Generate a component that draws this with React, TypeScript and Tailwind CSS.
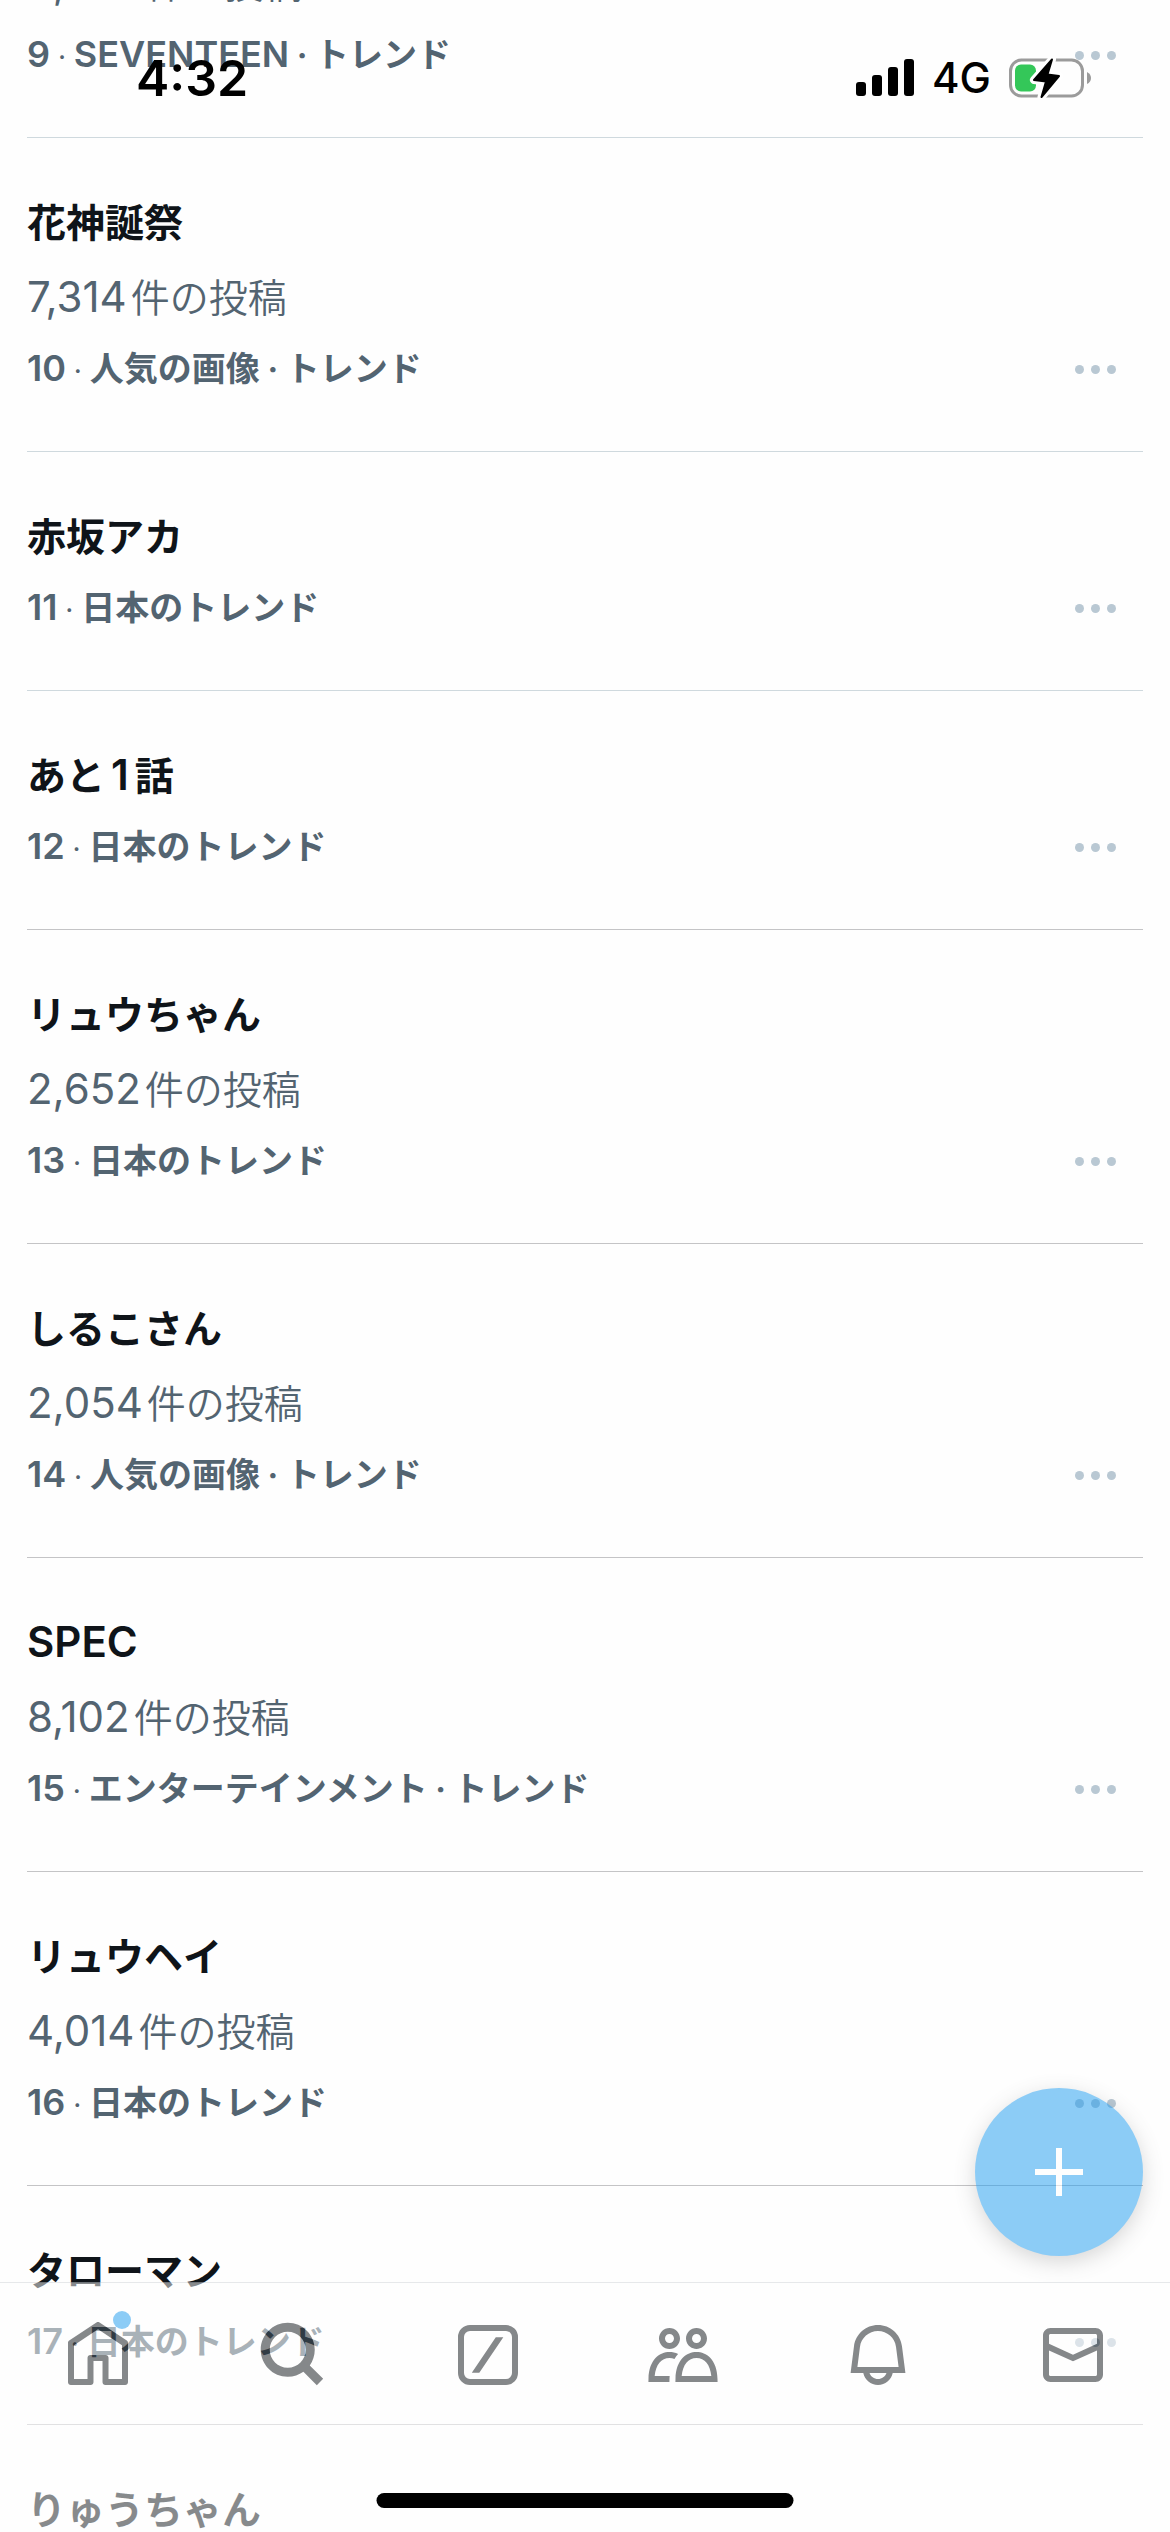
import React from 'react';
import clsx from 'clsx';

interface Trend {
    rank: number;
    title: string;
    posts?: string;
    category: string[];
    softDivider?: boolean;
}

const trends: Trend[] = [
    { rank: 9, title: 'ウジさん', posts: '4,868', category: ['SEVENTEEN', 'トレンド'], softDivider: true },
    { rank: 10, title: '花神誕祭', posts: '7,314', category: ['人気の画像', 'トレンド'], softDivider: true },
    { rank: 11, title: '赤坂アカ', category: ['日本のトレンド'], softDivider: true },
    { rank: 12, title: 'あと1話', category: ['日本のトレンド'] },
    { rank: 13, title: 'リュウちゃん', posts: '2,652', category: ['日本のトレンド'] },
    { rank: 14, title: 'しるこさん', posts: '2,054', category: ['人気の画像', 'トレンド'] },
    { rank: 15, title: 'SPEC', posts: '8,102', category: ['エンターテインメント', 'トレンド'] },
    { rank: 16, title: 'リュウヘイ', posts: '4,014', category: ['日本のトレンド'] },
    { rank: 17, title: 'タローマン', category: ['日本のトレンド'] },
    { rank: 18, title: 'りゅうちゃん', category: ['日本のトレンド'] }
];

const tabs = [
    {
        label: 'ホーム',
        badge: true,
        d: 'M21.591 7.146L12.52 1.157c-.316-.21-.724-.21-1.04 0l-9.071 5.99c-.26.173-.409.456-.409.757v13.183c0 .502.418.913.929.913h6.638c.511 0 .929-.41.929-.913v-7.075h3.008v7.075c0 .502.418.913.929.913h6.639c.51 0 .928-.41.928-.913V7.904c0-.301-.158-.584-.408-.758zM20 20l-4.5.01.011-7.097c0-.502-.418-.913-.928-.913H9.44c-.511 0-.929.41-.929.913L8.5 20H4V8.773l8.011-5.342L20 8.764z'
    },
    {
        label: '検索',
        d: 'M10.25 4.25c-3.314 0-6 2.686-6 6s2.686 6 6 6c1.657 0 3.155-.67 4.243-1.757 1.087-1.088 1.757-2.586 1.757-4.243 0-3.314-2.686-6-6-6zm-9 6c0-4.971 4.029-9 9-9s9 4.029 9 9c0 1.943-.617 3.744-1.664 5.215l4.475 4.474-2.122 2.122-4.474-4.475c-1.471 1.047-3.272 1.664-5.215 1.664-4.971 0-9-4.029-9-9z'
    },
    {
        label: 'Grok',
        d: 'M6 2h12a4 4 0 0 1 4 4v12a4 4 0 0 1-4 4H6a4 4 0 0 1-4-4V6a4 4 0 0 1 4-4zm0 2a2 2 0 0 0-2 2v12a2 2 0 0 0 2 2h12a2 2 0 0 0 2-2V6a2 2 0 0 0-2-2zM14.6 6.1h2.5L9.1 17.9H6.6z'
    },
    {
        label: 'コミュニティ',
        d: 'M7.501 19.917L7.471 21H.472l.029-1.027c.184-6.618 3.736-8.977 7-8.977.963 0 1.95.212 2.87.672-.444.478-.851 1.03-1.212 1.656-.507-.204-1.054-.329-1.658-.329-2.767 0-4.57 2.223-4.938 6.004H7.56c-.023.302-.05.599-.059.918zm15.998.056L23.528 21H9.472l.029-1.027c.184-6.618 3.736-8.977 7-8.977s6.816 2.358 7 8.977zM21.437 19c-.367-3.781-2.17-6.004-4.938-6.004s-4.57 2.223-4.938 6.004h9.875zm-4.938-9c-.799 0-1.527-.279-2.116-.73-.836-.64-1.384-1.638-1.384-2.77 0-1.93 1.567-3.5 3.5-3.5s3.5 1.57 3.5 3.5c0 1.132-.548 2.13-1.384 2.77-.589.451-1.317.73-2.116.73zm-1.5-3.5c0 .827.673 1.5 1.5 1.5s1.5-.673 1.5-1.5-.673-1.5-1.5-1.5-1.5.673-1.5 1.5zM7.5 3C9.433 3 11 4.57 11 6.5S9.433 10 7.5 10 4 8.43 4 6.5 5.567 3 7.5 3zm0 2C6.673 5 6 5.673 6 6.5S6.673 8 7.5 8 9 7.327 9 6.5 8.327 5 7.5 5z'
    },
    {
        label: '通知',
        d: 'M19.993 9.042C19.48 5.017 16.054 2 11.996 2s-7.49 3.021-7.999 7.051L2.866 18H7.1c.463 2.282 2.481 4 4.9 4s4.437-1.718 4.9-4h4.236l-1.143-8.958zM12 20c-1.306 0-2.417-.835-2.829-2h5.658c-.412 1.165-1.523 2-2.829 2zm-6.866-4l.847-6.698C6.364 6.272 8.941 4 11.996 4s5.627 2.268 6.013 5.295L18.864 16H5.134z'
    },
    {
        label: 'メッセージ',
        d: 'M1.998 5.5c0-1.381 1.119-2.5 2.5-2.5h15c1.381 0 2.5 1.119 2.5 2.5v13c0 1.381-1.119 2.5-2.5 2.5h-15c-1.381 0-2.5-1.119-2.5-2.5v-13zm2.5-.5c-.276 0-.5.224-.5.5v2.764l8 3.638 8-3.636V5.5c0-.276-.224-.5-.5-.5h-15zm15.5 5.463l-8 3.636-8-3.638V18.5c0 .276.224.5.5.5h15c.276 0 .5-.224.5-.5v-8.037z'
    }
];

// Kana and kanji are set a little smaller than the Latin text beside them,
// and a Latin run between two Japanese ones gets some air on both sides
function MixedText({ text, jpClass }: { text: string; jpClass: string }) {
    const parts = text.split(/([ぁ-んァ-ヶー一-龠]+)/);
    return parts.map((part, i) => {
        if (i % 2 === 1) return <span key={i} className={jpClass}>{part}</span>;
        const between = i > 0 && i < parts.length - 1;
        return <span key={i} className={clsx(between && 'mx-[6px]')}>{part}</span>;
    });
}

function TrendRow({ trend }: { trend: Trend }) {
    return (
        <li
            className={clsx(
                'mx-[27px] pt-[58px] pb-[59px] border-b',
                trend.softDivider ? 'border-[#cfd9de]' : 'border-[#c4c4c6]'
            )}
        >
            <h2 className="h-[52px] leading-[52px] text-[42px] font-semibold text-[#0f1419] whitespace-nowrap">
                <MixedText text={trend.title} jpClass="text-[39px]" />
            </h2>
            {trend.posts && (
                <p className="mt-[22px] h-[53px] leading-[53px] text-[42px] text-[#536471] whitespace-nowrap">
                    {trend.posts}
                    <span className="ml-1 text-[39px] font-[350]">件の投稿</span>
                </p>
            )}
            <div className="mt-[23px] h-[46px] flex items-center justify-between">
                <p className="leading-[46px] text-[36px] font-semibold text-[#536471] whitespace-nowrap">
                    {trend.rank}
                    <span className="text-[28px] font-normal"> · </span>
                    {trend.category.map((name, i) => (
                        <React.Fragment key={name}>
                            {i > 0 && <span className="text-[32px] font-bold"> · </span>}
                            <MixedText text={name} jpClass="text-[34px]" />
                        </React.Fragment>
                    ))}
                </p>
                <button aria-label="その他" className="flex items-center gap-[7px] mr-[27px] h-full">
                    <span className="size-[9px] rounded-full bg-[#b9c8d3]" />
                    <span className="size-[9px] rounded-full bg-[#b9c8d3]" />
                    <span className="size-[9px] rounded-full bg-[#b9c8d3]" />
                </button>
            </div>
        </li>
    );
}

function StatusBar() {
    return (
        <header className="absolute inset-x-0 top-0 flex items-center justify-between pt-[48px] pl-[136px] pr-[78px] text-black">
            <time className="leading-[60px] text-[50px] font-semibold">4:32</time>
            <div className="flex items-center">
                <svg width="58" height="38" viewBox="0 0 58 38" aria-hidden="true">
                    <rect x="0" y="23" width="10" height="14" rx="3" />
                    <rect x="16" y="16" width="10" height="21" rx="3" />
                    <rect x="32" y="8" width="10" height="29" rx="3" />
                    <rect x="48" y="0" width="10" height="37" rx="3" />
                </svg>
                <span className="ml-[18px] leading-[60px] text-[42px] font-medium">4G</span>
                <svg className="ml-[18px]" width="83" height="42" viewBox="0 0 83 42" aria-hidden="true">
                    <rect x="1.5" y="3" width="72" height="36" rx="11" fill="none" stroke="#9b9b9b" strokeWidth="3" />
                    <path d="M78 15q4 2 4 6t-4 6z" fill="#9b9b9b" />
                    <rect x="6" y="7.5" width="21" height="27" rx="6" fill="#34c759" />
                    <path
                        d="M43 2.5L25 23L37 24.5L32.5 40L50 19L38.5 17.5z"
                        stroke="#fff"
                        strokeWidth="8"
                        strokeLinejoin="round"
                    />
                    <path
                        d="M43 2.5L25 23L37 24.5L32.5 40L50 19L38.5 17.5z"
                        stroke="#000"
                        strokeWidth="2"
                        strokeLinejoin="round"
                    />
                </svg>
            </div>
        </header>
    );
}

function TabBar() {
    return (
        <nav className="absolute inset-x-0 bottom-0 h-[250px] pt-[36px] grid grid-cols-6 items-start justify-items-center bg-white border-t border-[#cfd4d8] opacity-50">
            {tabs.map(tab => (
                <button key={tab.label} aria-label={tab.label} className="relative size-[72px]">
                    <svg viewBox="0 0 24 24" className="size-[72px] fill-[#0f1419]" aria-hidden="true">
                        <path fillRule={tab.label === 'Grok' ? 'evenodd' : 'nonzero'} d={tab.d} />
                    </svg>
                    {tab.badge && (
                        <span className="absolute -top-[8px] right-[3px] size-[18px] rounded-full bg-[#1d9bf0]" />
                    )}
                </button>
            ))}
        </nav>
    );
}

export default function App() {
    return (
        <div className="relative h-screen overflow-hidden bg-[#fefefe] font-['Inter','Noto_Sans_CJK_JP',sans-serif]">
            <main>
                <ul className="-mt-[176px]">
                    {trends.map(trend => (
                        <TrendRow key={trend.rank} trend={trend} />
                    ))}
                </ul>
            </main>

            <StatusBar />

            <button
                aria-label="ポストする"
                className="absolute right-[27px] bottom-[276px] size-[168px] rounded-full bg-[#1d9bf0] opacity-50 flex items-center justify-center shadow-[0_6px_20px_rgba(0,0,0,0.3)]"
            >
                <svg width="48" height="48" viewBox="0 0 48 48" aria-hidden="true">
                    <path d="M24 0v48M0 24h48" stroke="#fff" strokeWidth="6" />
                </svg>
            </button>

            <TabBar />

            {/* Home indicator */}
            <div className="absolute bottom-[24px] left-1/2 -translate-x-1/2 w-[417px] h-[15px] rounded-full bg-black" />
        </div>
    );
}
